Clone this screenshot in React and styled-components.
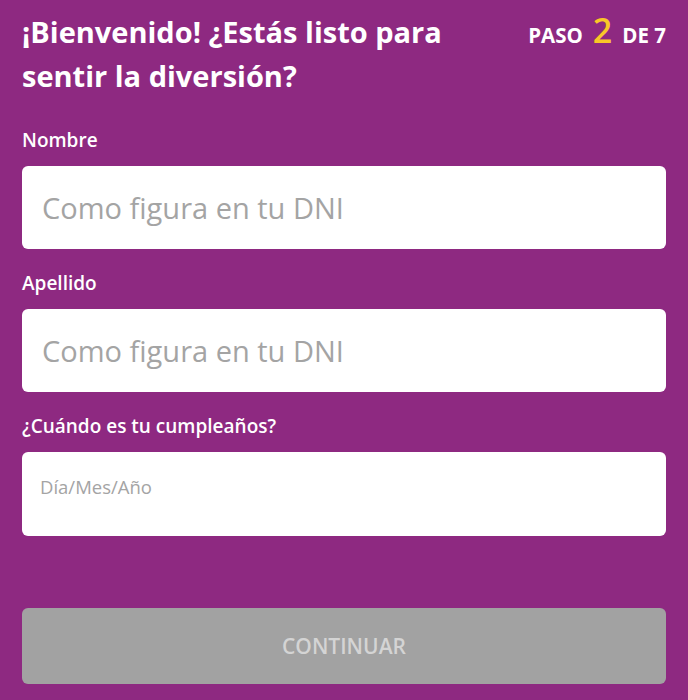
import React from "react";
import styled, { createGlobalStyle } from "styled-components";

const GlobalStyle = createGlobalStyle`
  html, body {
    margin: 0;
    padding: 0;
    background: #8e2981;
  }
  body {
    font-family: "Open Sans", "Noto Sans", sans-serif;
  }
`;

const Page = styled.div`
  width: 688px;
  min-height: 700px;
  box-sizing: border-box;
  padding: 10px 22px 16px;
  background: #8e2981;
  color: #fff;
`;

const Header = styled.div`
  display: flex;
  justify-content: space-between;
  align-items: flex-start;
`;

const Title = styled.h1`
  margin: 0;
  width: 440px;
  font-size: 29px;
  font-weight: 700;
  line-height: 44px;
`;

const Step = styled.div`
  display: flex;
  align-items: baseline;
  gap: 10px;
  font-size: 20.5px;
  font-weight: 700;
  line-height: 40px;
`;

const StepNumber = styled.span`
  color: #f9c628;
  font-size: 34px;
  font-weight: 600;
`;

const Form = styled.form`
  display: flex;
  flex-direction: column;
  margin-top: 30px;
`;

const Field = styled.div`
  display: flex;
  flex-direction: column;
  margin-bottom: 22px;
`;

const Label = styled.label`
  font-size: 19px;
  font-weight: 600;
  line-height: 24px;
  margin-bottom: 14px;
`;

const Input = styled.input`
  box-sizing: border-box;
  width: 100%;
  height: ${(p) => (p.$small ? "84px" : "83px")};
  border: none;
  border-radius: 6px;
  background: #fff;
  padding: ${(p) => (p.$small ? "0 18px 16px" : "0 20px")};
  font-family: "Open Sans", sans-serif;
  font-size: ${(p) => (p.$small ? "18.5px" : "29px")};
  color: #333;
  outline: none;
  &::placeholder {
    color: #a4a4a4;
  }
`;

const Button = styled.button`
  margin-top: 50px;
  width: 100%;
  height: 76px;
  border: none;
  border-radius: 6px;
  background: #a2a2a2;
  color: #d4d4d4;
  font-family: "Open Sans", sans-serif;
  font-size: 21px;
  font-weight: 600;
  text-transform: uppercase;
`;

export default function App() {
  return (
    <Page>
      <GlobalStyle />
      <Header>
        <Title>¡Bienvenido! ¿Estás listo para sentir la diversión?</Title>
        <Step>
          PASO <StepNumber>2</StepNumber> DE 7
        </Step>
      </Header>
      <Form onSubmit={(e) => e.preventDefault()}>
        <Field>
          <Label>Nombre</Label>
          <Input placeholder="Como figura en tu DNI" />
        </Field>
        <Field>
          <Label>Apellido</Label>
          <Input placeholder="Como figura en tu DNI" />
        </Field>
        <Field>
          <Label>¿Cuándo es tu cumpleaños?</Label>
          <Input $small placeholder="Día/Mes/Año" />
        </Field>
        <Button type="button" disabled>
          Continuar
        </Button>
      </Form>
    </Page>
  );
}
